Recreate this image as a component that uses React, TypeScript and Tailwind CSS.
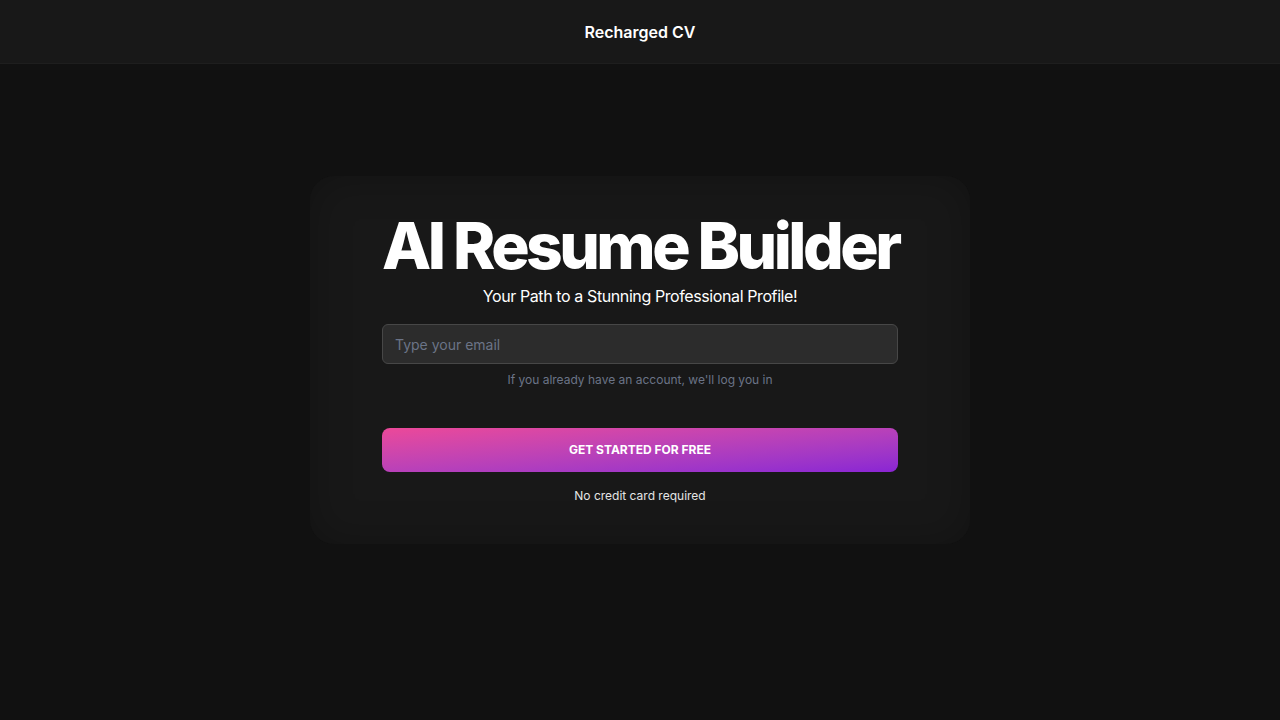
export default function App() {
  return (
    <div className="min-h-screen bg-[#111111] text-white font-['Inter',sans-serif]">
      <header className="h-16 bg-[#181818] border-b border-[#1e1e1e] flex items-center justify-center">
        <span className="text-base font-semibold">Recharged CV</span>
      </header>

      <main className="flex justify-center pt-[112px]">
        <div className="w-[660px] rounded-3xl bg-[#181818] px-[72px] pt-[36px] pb-[40px] shadow-[inset_0_0_40px_rgba(0,0,0,0.25)]">
          <h1 className="text-center whitespace-nowrap text-[64px] leading-[68px] font-extrabold tracking-[-0.055em]">
            AI Resume Builder
          </h1>
          <p className="text-center text-base tracking-tight mt-1">
            Your Path to a Stunning Professional Profile!
          </p>

          <input
            type="email"
            placeholder="Type your email"
            className="mt-4 w-full h-10 rounded-md bg-[#2c2c2c] border border-[#474747] px-3 text-sm text-white placeholder:text-[#6b7487] outline-none"
          />
          <p className="text-center text-xs text-[#6b7487] mt-2">
            If you already have an account, we'll log you in
          </p>

          <button className="mt-10 w-full h-11 rounded-lg bg-gradient-to-br from-[#ec4899] to-[#8a24d4] text-xs font-bold">
            GET STARTED FOR FREE
          </button>
          <p className="text-center text-xs mt-4 text-[#e5e5e5]">No credit card required</p>
        </div>
      </main>
    </div>
  );
}
